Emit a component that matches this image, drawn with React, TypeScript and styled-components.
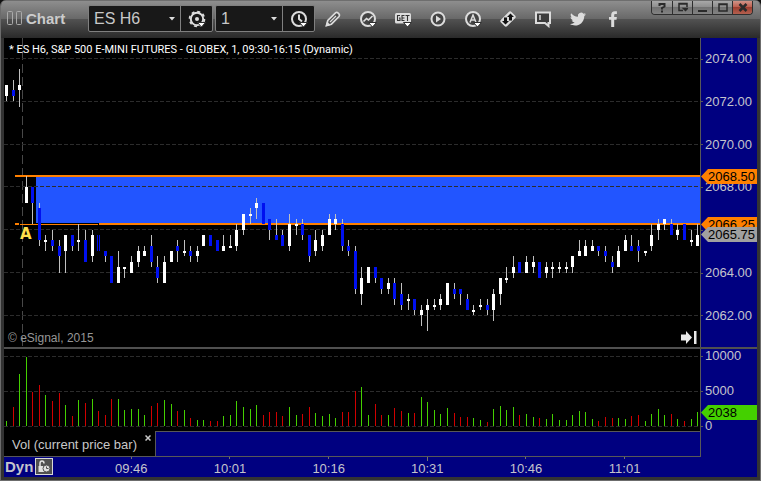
import React from "react";
import styled, { createGlobalStyle } from "styled-components";

/* ---------- data ---------- */

// [high, open, close, low] in quarter points above 2062.00
type Bar = [number, number, number, number];

const BARS: Bar[] = [
  [43, 41, 43, 40], [44, 42, 41, 40], [46, 42, 43, 39], [26, 21, 24, 21], [24, 24, 21, 17],
  [21, 20, 14, 13], [15, 14, 14, 12], [16, 14, 13, 12], [14, 13, 11, 8], [15, 12, 15, 8],
  [15, 15, 13, 12], [17, 14, 14, 12], [16, 14, 10, 10], [16, 11, 15, 10], [15, 15, 12, 12],
  [12, 12, 11, 10], [11, 11, 6, 6], [12, 6, 9, 6], [9, 9, 9, 7], [11, 8, 10, 8],
  [13, 10, 12, 9], [13, 11, 12, 11], [15, 13, 10, 9], [11, 9, 7, 6], [11, 6, 10, 6],
  [12, 10, 12, 10], [14, 13, 12, 10], [14, 12, 12, 11], [13, 12, 11, 10], [13, 11, 12, 10],
  [15, 13, 15, 13], [15, 15, 13, 13], [14, 14, 12, 12], [15, 12, 13, 12], [15, 13, 13, 13],
  [17, 13, 16, 12], [19, 16, 19, 15], [20, 19, 19, 17], [22, 20, 21, 18], [21, 21, 17, 17],
  [18, 18, 16, 14], [18, 15, 14, 14], [16, 15, 13, 13], [19, 13, 17, 12], [18, 17, 17, 15],
  [18, 17, 15, 14], [15, 15, 11, 10], [16, 12, 14, 11], [16, 13, 15, 12], [19, 15, 18, 15],
  [19, 17, 18, 16], [18, 17, 13, 12], [14, 13, 12, 11], [13, 12, 5, 4], [9, 4, 7, 2],
  [9, 6, 9, 6], [9, 9, 7, 6], [7, 7, 5, 4], [7, 5, 6, 4], [7, 6, 3, 2],
  [6, 4, 2, 1], [4, 3, 3, 1], [3, 3, 1, 0], [2, 0, 1, -2], [3, 1, 2, -3],
  [3, 2, 2, 1], [4, 2, 3, 1], [6, 2, 6, 2], [6, 5, 4, 3], [5, 5, 4, 2],
  [4, 3, 1, 1], [2, 1, 1, 0], [3, 2, 2, 1], [3, 2, 1, 0], [5, 1, 4, -1],
  [7, 4, 7, 2], [9, 7, 7, 6], [11, 8, 9, 7], [10, 10, 8, 8], [11, 8, 10, 8],
  [11, 9, 10, 8], [10, 10, 7, 7], [10, 8, 9, 7], [10, 9, 9, 7], [10, 9, 9, 8],
  [10, 9, 9, 8], [11, 9, 11, 8], [14, 11, 12, 11], [14, 11, 13, 11], [14, 12, 13, 12],
  [13, 13, 12, 11], [13, 12, 11, 10], [11, 10, 9, 8], [13, 9, 12, 9], [15, 12, 14, 12],
  [15, 13, 12, 12], [14, 13, 12, 10], [12, 12, 12, 11], [17, 13, 15, 12], [18, 16, 17, 14],
  [18, 17, 18, 16], [18, 17, 15, 15], [17, 15, 16, 14], [17, 17, 14, 14], [16, 14, 14, 13],
  [17, 13, 15, 13],
];

// Volume per bar, one unit = 143 contracts; negative marks a down bar
const VOLUMES = [
  5, -19, 52, 69, -34, -41, 31, -25, -33, 21, -10, 26, -23, 27, -15, -11, -27, 27, 16, 17,
  17, 11, -20, -23, 26, 22, -15, 16, -8, 6, 6, -5, -5, 10, 11, 25, 19, 17, 21, -11,
  -14, -14, -10, 19, 11, -12, -19, 13, 10, 12, 8, -14, -14, -35, 39, 11, -22, -11, 11, -18,
  -15, 13, -13, 29, 24, 16, 12, 18, -13, -9, -9, 8, 6, -4, 17, 20, 16, 19, -11, 12,
  9, -8, 7, 12, 6, 6, 11, 15, 14, 7, -5, -9, -8, 8, 7, -10, -11, 5, 12, 17,
  11, -12, 7, -5, 7, 14,
];

// The level behind the last-price tags carries no text
const PRICE_LEVELS = [
  { tick: 48, label: "2074.00" },
  { tick: 40, label: "2072.00" },
  { tick: 32, label: "2070.00" },
  { tick: 24, label: "2068.00" },
  { tick: 16, label: "" },
  { tick: 8, label: "2064.00" },
  { tick: 0, label: "2062.00" },
];
const VOLUME_LABELS = ["10000", "5000", "0"];
const TIMES = ["09:46", "10:01", "10:16", "10:31", "10:46", "11:01"];

const CHART_W = 696;
const PRICE_H = 309;
const VOLUME_H = 82;

const barX = (i: number) => 2 + Math.round(i * 6.583);
const exactY = (tick: number) => 277.4 - tick * 5.355;
const priceY = (tick: number) => Math.round(exactY(tick));

/* ---------- styles ---------- */

const GlobalStyle = createGlobalStyle`
  * { box-sizing: border-box; }
  body { margin: 0; background: #111; font-family: "Liberation Sans", Arial, sans-serif; }
  button, select { font: inherit; color: inherit; margin: 0; padding: 0; border: 0; background: none; }
  button { cursor: pointer; }
  svg { display: block; }
`;

const Window = styled.main`
  display: flex;
  flex-direction: column;
  min-height: 100vh;
  border-radius: 6px 6px 0 0;
  overflow: hidden;
  border: solid #6c6c6c;
  border-width: 0 1px 1px;
  background: #333;
`;

const Toolbar = styled.header`
  display: flex;
  align-items: flex-start;
  height: 38px;
  padding: 0 7px 0 6px;
  border-top: 1px solid #6e6e6e;
  background: linear-gradient(#8e8e8e 0, #686868 18px, #525252 18px, #2a2a2a 37px);
`;

const Brand = styled.div`
  display: flex;
  align-items: center;
  gap: 4px;
  width: 81px;
  height: 34px;
  color: #ccc;
  font-size: 15px;
  font-weight: bold;
`;

const Combos = styled.div`
  display: flex;
  gap: 2px;
  padding-top: 4px;
`;

const ComboBox = styled.div<{ $width: number }>`
  display: flex;
  width: ${(p) => p.$width}px;
  height: 27px;
  border: 1px solid #808080;
  border-radius: 2px;
  background: #181818;
`;

const SelectWrap = styled.label`
  position: relative;
  display: flex;
  flex: 1;
  border-right: 1px solid #808080;
`;

const Select = styled.select`
  appearance: none;
  width: 100%;
  padding-left: 5px;
  color: #c8c8c8;
  font-size: 16px;
`;

const SelectCaret = styled.svg`
  position: absolute;
  right: 5px;
  top: 11px;
  pointer-events: none;
`;

const ComboButton = styled.button`
  display: flex;
  align-items: center;
  justify-content: center;
  width: 31px;
`;

const Tools = styled.nav`
  display: flex;
`;

const ToolButton = styled.button`
  display: flex;
  align-items: center;
  justify-content: center;
  width: 35px;
  height: 36px;
`;

const WindowButtons = styled.div`
  display: flex;
  margin-left: auto;
  border: 1px solid #2e2e2e;
  border-top: 0;
  border-radius: 0 0 4px 4px;
  overflow: hidden;
`;

const WindowButton = styled.button<{ $close?: boolean }>`
  display: flex;
  align-items: center;
  justify-content: center;
  width: 20px;
  height: 13px;
  background: ${(p) =>
    p.$close
      ? "linear-gradient(#d09488, #bc5a4a 50%, #9c3e30 50%, #b4604f)"
      : "linear-gradient(#a8a8a8, #8c8c8c 50%, #727272 50%, #828282)"};
  & + & { border-left: 1px solid #2e2e2e; }
`;

const Body = styled.section`
  display: grid;
  flex: 1;
  grid-template-columns: minmax(0, 1fr) 57px;
  grid-template-rows: minmax(309px, 1fr) 2px 82px 26px 20px;
  margin: 0 3px 3px;
  background: #000080;
`;

const Pane = styled.div`
  position: relative;
  background: #000;
`;

const Plot = styled.svg`
  position: absolute;
  inset: 0;
  width: 100%;
  height: 100%;
`;

const Splitter = styled.div`
  grid-column: 1 / -1;
  background: #505050;
`;

const PaneTitle = styled.h1`
  position: absolute;
  left: 5px;
  top: 5px;
  margin: 0;
  color: #fff;
  font: normal 11px/14px Roboto, sans-serif;
  white-space: nowrap;
`;

const Copyright = styled.p`
  position: absolute;
  left: 4px;
  bottom: 1px;
  margin: 0;
  color: #969696;
  font-size: 12px;
  line-height: 16px;
`;

const Marker = styled.span`
  position: absolute;
  left: 16px;
  top: 187px;
  color: #ffe04c;
  font: bold 15px/18px "DejaVu Sans", sans-serif;
`;

const JumpButton = styled.button`
  position: absolute;
  right: 3px;
  bottom: 3px;
`;

const Axis = styled.div<{ $top?: number; $bottom?: number; $spill?: number }>`
  position: relative;
  display: flex;
  flex-direction: column;
  justify-content: space-between;
  margin-bottom: -${(p) => p.$spill ?? 0}px;
  padding: ${(p) => p.$top ?? 0}px 0 ${(p) => p.$bottom ?? 0}px;
  border-left: 1px solid #585858;
`;

const AxisLabel = styled.span`
  display: flex;
  align-items: center;
  gap: 2px;
  height: 14px;
  color: #c4c4cc;
  font-size: 13px;
  line-height: 14px;
  &::before { content: ""; width: 2px; height: 1px; background: #585858; }
`;

const Tag = styled.output<{ $top: number; $color: string }>`
  position: absolute;
  left: 0;
  right: 0;
  top: ${(p) => p.$top}px;
  padding-left: 7px;
  background: ${(p) => p.$color};
  clip-path: polygon(0 50%, 7px 0, 100% 0, 100% 100%, 7px 100%);
  color: #000;
  font-size: 13px;
  line-height: 15px;
`;

const TabStrip = styled.div`
  display: flex;
  border-bottom: 1px solid #585858;
`;

const Tab = styled.div`
  display: flex;
  width: 151px;
  padding-left: 8px;
  background: #000;
  color: #c8c8c8;
  font-size: 13px;
`;

const TabName = styled.button`
  height: 26px;
  white-space: nowrap;
`;

const TabClose = styled.button`
  height: 14px;
  margin: 0 4px 0 auto;
`;

const TabRest = styled.div`
  flex: 1;
  border: solid #585858;
  border-width: 1px 0 0 1px;
`;

const AxisFoot = styled.div`
  border-left: 1px solid #585858;
`;

const TimeAxis = styled.footer`
  display: flex;
  padding-right: 26px;
`;

const Mode = styled.div`
  display: flex;
  align-items: center;
  gap: 2px;
  width: 78px;
  padding: 0 0 2px 1px;
  color: #c4c4cc;
  font-size: 15px;
  font-weight: bold;
`;

const LockButton = styled.button`
  display: flex;
  align-items: center;
  justify-content: center;
  width: 18px;
  height: 17px;
  border: 1px solid #d8d8d8;
  background: #505050;
`;

const Times = styled.div`
  display: grid;
  flex: 1;
  grid-template-columns: repeat(6, 1fr);
`;

const Time = styled.time<{ $major: boolean }>`
  display: flex;
  flex-direction: column;
  align-items: center;
  color: #c4c4cc;
  font-size: 13px;
  line-height: 15px;
  &::before {
    content: "";
    width: 1px;
    height: ${(p) => (p.$major ? 4 : 2)}px;
    margin-bottom: ${(p) => (p.$major ? 0 : 2)}px;
    background: #707070;
  }
`;

/* ---------- icons ---------- */

const Icon = ({ children }: { children: React.ReactNode }) => (
  <svg width="18" height="18" viewBox="0 0 18 18" fill="none" stroke="#dcdcdc" strokeWidth="2" aria-hidden="true">
    {children}
  </svg>
);

const MenuMark = () => <path d="M9.500 12.500h8l-4 4.500z" fill="#fff" stroke="#303030" strokeWidth="1" />;

const GearIcon = () => (
  <Icon>
    <circle cx="9" cy="9" r="6.200" />
    <circle cx="9" cy="9" r="7.500" strokeWidth="1.600" strokeDasharray="3 2.890" />
    <circle cx="9" cy="9" r="2" fill="#dcdcdc" stroke="none" />
    <MenuMark />
  </Icon>
);

const ClockIcon = () => (
  <Icon>
    <circle cx="9" cy="9" r="7" />
    <path d="M9 4.500V9l3 2.500" />
    <MenuMark />
  </Icon>
);

const PencilIcon = () => (
  <Icon>
    <path
      d="M2.500 15.500l1.300-5 7.700-7.700q1.300-1 2.700.3l.7.7q1.200 1.300.1 2.700l-7.600 7.700z"
      strokeWidth="1.700"
      fill="#4a4a4a"
    />
    <path d="M6 12l6-6" strokeWidth="1.200" />
    <path d="M1.500 16.500l1.500-5 3.500 3.500z" fill="#dcdcdc" stroke="none" />
  </Icon>
);

const StudyIcon = () => (
  <Icon>
    <circle cx="9" cy="9" r="7" fill="#444" />
    <path d="M4.500 11.500l3-3 2 1.500 4-4" strokeWidth="1.700" />
    <MenuMark />
  </Icon>
);

const GetIcon = () => (
  <Icon>
    <rect x="1" y="3" width="16" height="10.500" rx="1.500" fill="#dcdcdc" stroke="none" />
    <path
      d="M6 5.500H3.500v5H6V8H5M10.500 5.500H8v5h2.500M8 8h2.500M11.500 5.500h4M13.500 5.500v5.500"
      stroke="#333"
      strokeWidth="1.100"
    />
    <MenuMark />
  </Icon>
);

const PlayIcon = () => (
  <Icon>
    <circle cx="9" cy="9" r="6.500" fill="#444" />
    <path d="M7 5.500l5 3.500-5 3.500z" fill="#dcdcdc" stroke="none" />
  </Icon>
);

const AlertIcon = () => (
  <Icon>
    <circle cx="9" cy="9" r="7" fill="#444" />
    <path d="M6 12.500l3-7.500 3 7.500M7 10h4" strokeWidth="1.500" />
    <MenuMark />
  </Icon>
);

const TradeIcon = () => (
  <Icon>
    <rect x="1.500" y="4.500" width="15" height="9" rx="2" transform="rotate(-45 9 9)" fill="#dcdcdc" stroke="none" />
    <path
      d="M11.500 3.500l3.500 3.500h-2v3.500h-3V7H8zM6.500 14.500L3 11h2V7.500h3V11h2z"
      fill="#111"
      stroke="none"
    />
  </Icon>
);

const ChatIcon = () => (
  <Icon>
    <path d="M2 2.500h14v10.500h-1.500v3l-3.500-3H2z" fill="#3c3c3c" />
    <path d="M6 5v5" stroke="#fff" strokeWidth="1.200" />
  </Icon>
);

const TwitterIcon = () => (
  <Icon>
    <path
      d="M17 4.200c-.6.300-1.200.5-1.900.5.700-.4 1.200-1 1.400-1.800-.6.400-1.300.6-2 .8A3.300 3.300 0 0 0 8.900 6.700C6.200 6.500 3.700 5.200 2.100 3.200c-.9 1.500-.4 3.400 1 4.300-.5 0-1-.2-1.500-.4 0 1.600 1.100 2.900 2.600 3.200-.5.100-1 .1-1.500 0 .4 1.300 1.600 2.200 3 2.300A6.600 6.600 0 0 1 1 14c5.500 3.400 14 .9 14.300-8.100.7-.4 1.200-1 1.700-1.700z"
      fill="#dcdcdc"
      stroke="none"
    />
  </Icon>
);

const FacebookIcon = () => (
  <Icon>
    <path
      d="M7.200 17V9.700H5V7h2.200V5c0-2.500 1.300-3.800 3.700-3.800h2v2.700h-1.400c-1 0-1.300.4-1.300 1.300V7h2.700l-.4 2.700h-2.300V17z"
      fill="#dcdcdc"
      stroke="none"
    />
  </Icon>
);

const TOOLS: { label: string; icon: React.FC }[] = [
  { label: "Draw", icon: PencilIcon },
  { label: "Studies", icon: StudyIcon },
  { label: "GET studies", icon: GetIcon },
  { label: "Playback", icon: PlayIcon },
  { label: "Alerts", icon: AlertIcon },
  { label: "Trade", icon: TradeIcon },
  { label: "Comment", icon: ChatIcon },
  { label: "Twitter", icon: TwitterIcon },
  { label: "Facebook", icon: FacebookIcon },
];

const WINDOW_ICONS: { label: string; drawing: React.ReactNode }[] = [
  { label: "Help", drawing: <path d="M2.500 4V2h5v2.500L5 6v1.500M5 8.500v2" /> },
  { label: "Dock", drawing: <path d="M5 8.500H1v-7h8V5M1 2h8M5.500 6.500h4l-2 2z" strokeWidth="1.500" /> },
  { label: "Minimize", drawing: <path d="M0 9h9" /> },
  { label: "Maximize", drawing: <path d="M1 2h8v7H1zM1 2.500h8" strokeWidth="1.500" /> },
  { label: "Close", drawing: <path d="M1.500 2l7 7M8.500 2l-7 7" strokeWidth="2.500" /> },
];

/* ---------- chart pieces ---------- */

const GridLine = ({ y }: { y: number }) => (
  <line x1="0" x2={CHART_W} y1={y + 0.5} y2={y + 0.5} stroke="#2c2c2c" strokeDasharray="4 2" />
);

const Candle = ({ bar, index }: { bar: Bar; index: number }) => {
  const [high, open, close, low] = bar;
  const x = barX(index);
  const top = priceY(Math.max(open, close));
  const height = Math.max(2, priceY(Math.min(open, close)) - top);
  return (
    <g>
      <rect x={x} y={priceY(high)} width="1" height={priceY(low) - priceY(high)} fill="#c0c0c0" />
      <rect x={x - 1} y={top} width="3" height={height} fill={close >= open ? "#fff" : "#0010f0"} />
      {index === 14 && <rect x={x} y={top} width="1" height={height} fill="#000" />}
    </g>
  );
};

const PricePlot = () => (
  <Plot
    viewBox={`0 0 ${CHART_W} ${PRICE_H}`}
    preserveAspectRatio="none"
    shapeRendering="crispEdges"
    role="img"
    aria-label="Price candles"
  >
    <line x1="18.500" x2="18.500" y1="0" y2={PRICE_H} stroke="#484848" strokeDasharray="9 4" />
    <rect x="32" y="139" width="664" height="46" fill="#2255ff" />
    {PRICE_LEVELS.map(({ tick }) => (
      <GridLine key={tick} y={Math.floor(exactY(tick))} />
    ))}
    <rect x="11" y="137" width="685" height="2" fill="#ff8000" />
    <rect x="11" y="185" width="4" height="2" fill="#ff8000" />
    <rect x="16" y="186" width="78" height="1" fill="#ff8000" />
    <rect x="95" y="185" width="601" height="2" fill="#ff8000" />
    {BARS.map((bar, i) => (
      <Candle key={i} bar={bar} index={i} />
    ))}
  </Plot>
);

const VolumePlot = () => (
  <Plot
    viewBox={`0 0 ${CHART_W} ${VOLUME_H}`}
    preserveAspectRatio="none"
    shapeRendering="crispEdges"
    role="img"
    aria-label="Volume bars"
  >
    {[7, 42, 77].map((y) => (
      <GridLine key={y} y={y} />
    ))}
    {VOLUMES.map((v, i) => (
      <rect
        key={i}
        x={barX(i)}
        y={77 - Math.abs(v)}
        width="1"
        height={Math.abs(v)}
        fill={v > 0 ? "#44d000" : "#d00000"}
      />
    ))}
  </Plot>
);

interface ComboProps {
  label: string;
  value: string;
  width: number;
  action: string;
  children: React.ReactNode;
}

const Combo = ({ label, value, width, action, children }: ComboProps) => (
  <ComboBox $width={width}>
    <SelectWrap>
      <Select aria-label={label} defaultValue={value}>
        <option>{value}</option>
      </Select>
      <SelectCaret width="6" height="4" viewBox="0 0 6 4" aria-hidden="true">
        <path d="M0 0h6L3 3.500z" fill="#dcdcdc" />
      </SelectCaret>
    </SelectWrap>
    <ComboButton aria-label={action}>{children}</ComboButton>
  </ComboBox>
);

export default function App() {
  return (
    <>
      <GlobalStyle />
      <Window>
        <Toolbar>
          <Brand>
            <svg width="15" height="14" viewBox="0 0 15 14" fill="none" stroke="#aaa" aria-hidden="true">
              <rect x=".5" y=".5" width="5" height="13" rx="1" />
              <rect x="9.500" y=".5" width="5" height="13" rx="1" />
            </svg>
            Chart
          </Brand>
          <Combos>
            <Combo label="Symbol" value="ES H6" width={125} action="Symbol settings">
              <GearIcon />
            </Combo>
            <Combo label="Interval" value="1" width={100} action="Time template">
              <ClockIcon />
            </Combo>
          </Combos>
          <Tools aria-label="Chart tools">
            {TOOLS.map(({ label, icon: ToolIcon }) => (
              <ToolButton key={label} aria-label={label}>
                <ToolIcon />
              </ToolButton>
            ))}
          </Tools>
          <WindowButtons>
            {WINDOW_ICONS.map(({ label, drawing }) => (
              <WindowButton key={label} aria-label={label} $close={label === "Close"}>
                <svg
                  width="10"
                  height="11"
                  viewBox="0 0 10 11"
                  fill="none"
                  stroke="#2a2a2a"
                  strokeWidth="2"
                  aria-hidden="true"
                >
                  {drawing}
                </svg>
              </WindowButton>
            ))}
          </WindowButtons>
        </Toolbar>
        <Body>
          <Pane>
            <PricePlot />
            <PaneTitle>* ES H6, S&amp;P 500 E-MINI FUTURES - GLOBEX, 1, 09:30-16:15 (Dynamic)</PaneTitle>
            <Marker>A</Marker>
            <Copyright>© eSignal, 2015</Copyright>
            <JumpButton aria-label="Go to latest bar">
              <svg width="16" height="13" viewBox="0 0 16 13" fill="#e8e8e8" aria-hidden="true">
                <path d="M0 3.500h5V0l6 6.500L5 13V9.500H0zM13 0h2.500v13H13z" />
              </svg>
            </JumpButton>
          </Pane>
          <Axis $top={14} $bottom={24}>
            {PRICE_LEVELS.map(({ tick, label }) => (
              <AxisLabel key={tick}>{label}</AxisLabel>
            ))}
            <Tag $top={131} $color="#ff8000">2068.50</Tag>
            <Tag $top={179} $color="#ff8000">2066.25</Tag>
            <Tag $top={189} $color="#a0a0a0">2065.75</Tag>
          </Axis>
          <Splitter />
          <Pane>
            <VolumePlot />
          </Pane>
          <Axis $spill={2}>
            {VOLUME_LABELS.map((label) => (
              <AxisLabel key={label}>{label}</AxisLabel>
            ))}
            <Tag $top={56} $color="#44d000">2038</Tag>
          </Axis>
          <TabStrip>
            <Tab>
              <TabName>Vol (current price bar)</TabName>
              <TabClose aria-label="Close Vol">
                <svg width="6" height="6" viewBox="0 0 6 6" stroke="#c8c8c8" strokeWidth="1.500" aria-hidden="true">
                  <path d="M.5.5l5 5M5.500.5l-5 5" />
                </svg>
              </TabClose>
            </Tab>
            <TabRest />
          </TabStrip>
          <AxisFoot />
          <TimeAxis>
            <Mode>
              Dyn
              <LockButton aria-label="Lock time template">
                <svg
                  width="14"
                  height="13"
                  viewBox="0 0 14 13"
                  fill="none"
                  stroke="#e0e0e0"
                  strokeWidth="1.500"
                  aria-hidden="true"
                >
                  <path d="M3 6V3.500Q3 1 5 1t2 2.500" />
                  <path d="M1.500 6H8v6H1.500z" fill="#e0e0e0" stroke="none" />
                  <circle cx="9.500" cy="8.500" r="3.500" fill="#e0e0e0" stroke="#505050" strokeWidth="1" />
                  <path d="M9.500 6.500v2h2" stroke="#505050" strokeWidth="1" />
                </svg>
              </LockButton>
            </Mode>
            <Times>
              {TIMES.map((t) => (
                <Time key={t} $major={t === "10:31"}>
                  {t}
                </Time>
              ))}
            </Times>
          </TimeAxis>
        </Body>
      </Window>
    </>
  );
}
